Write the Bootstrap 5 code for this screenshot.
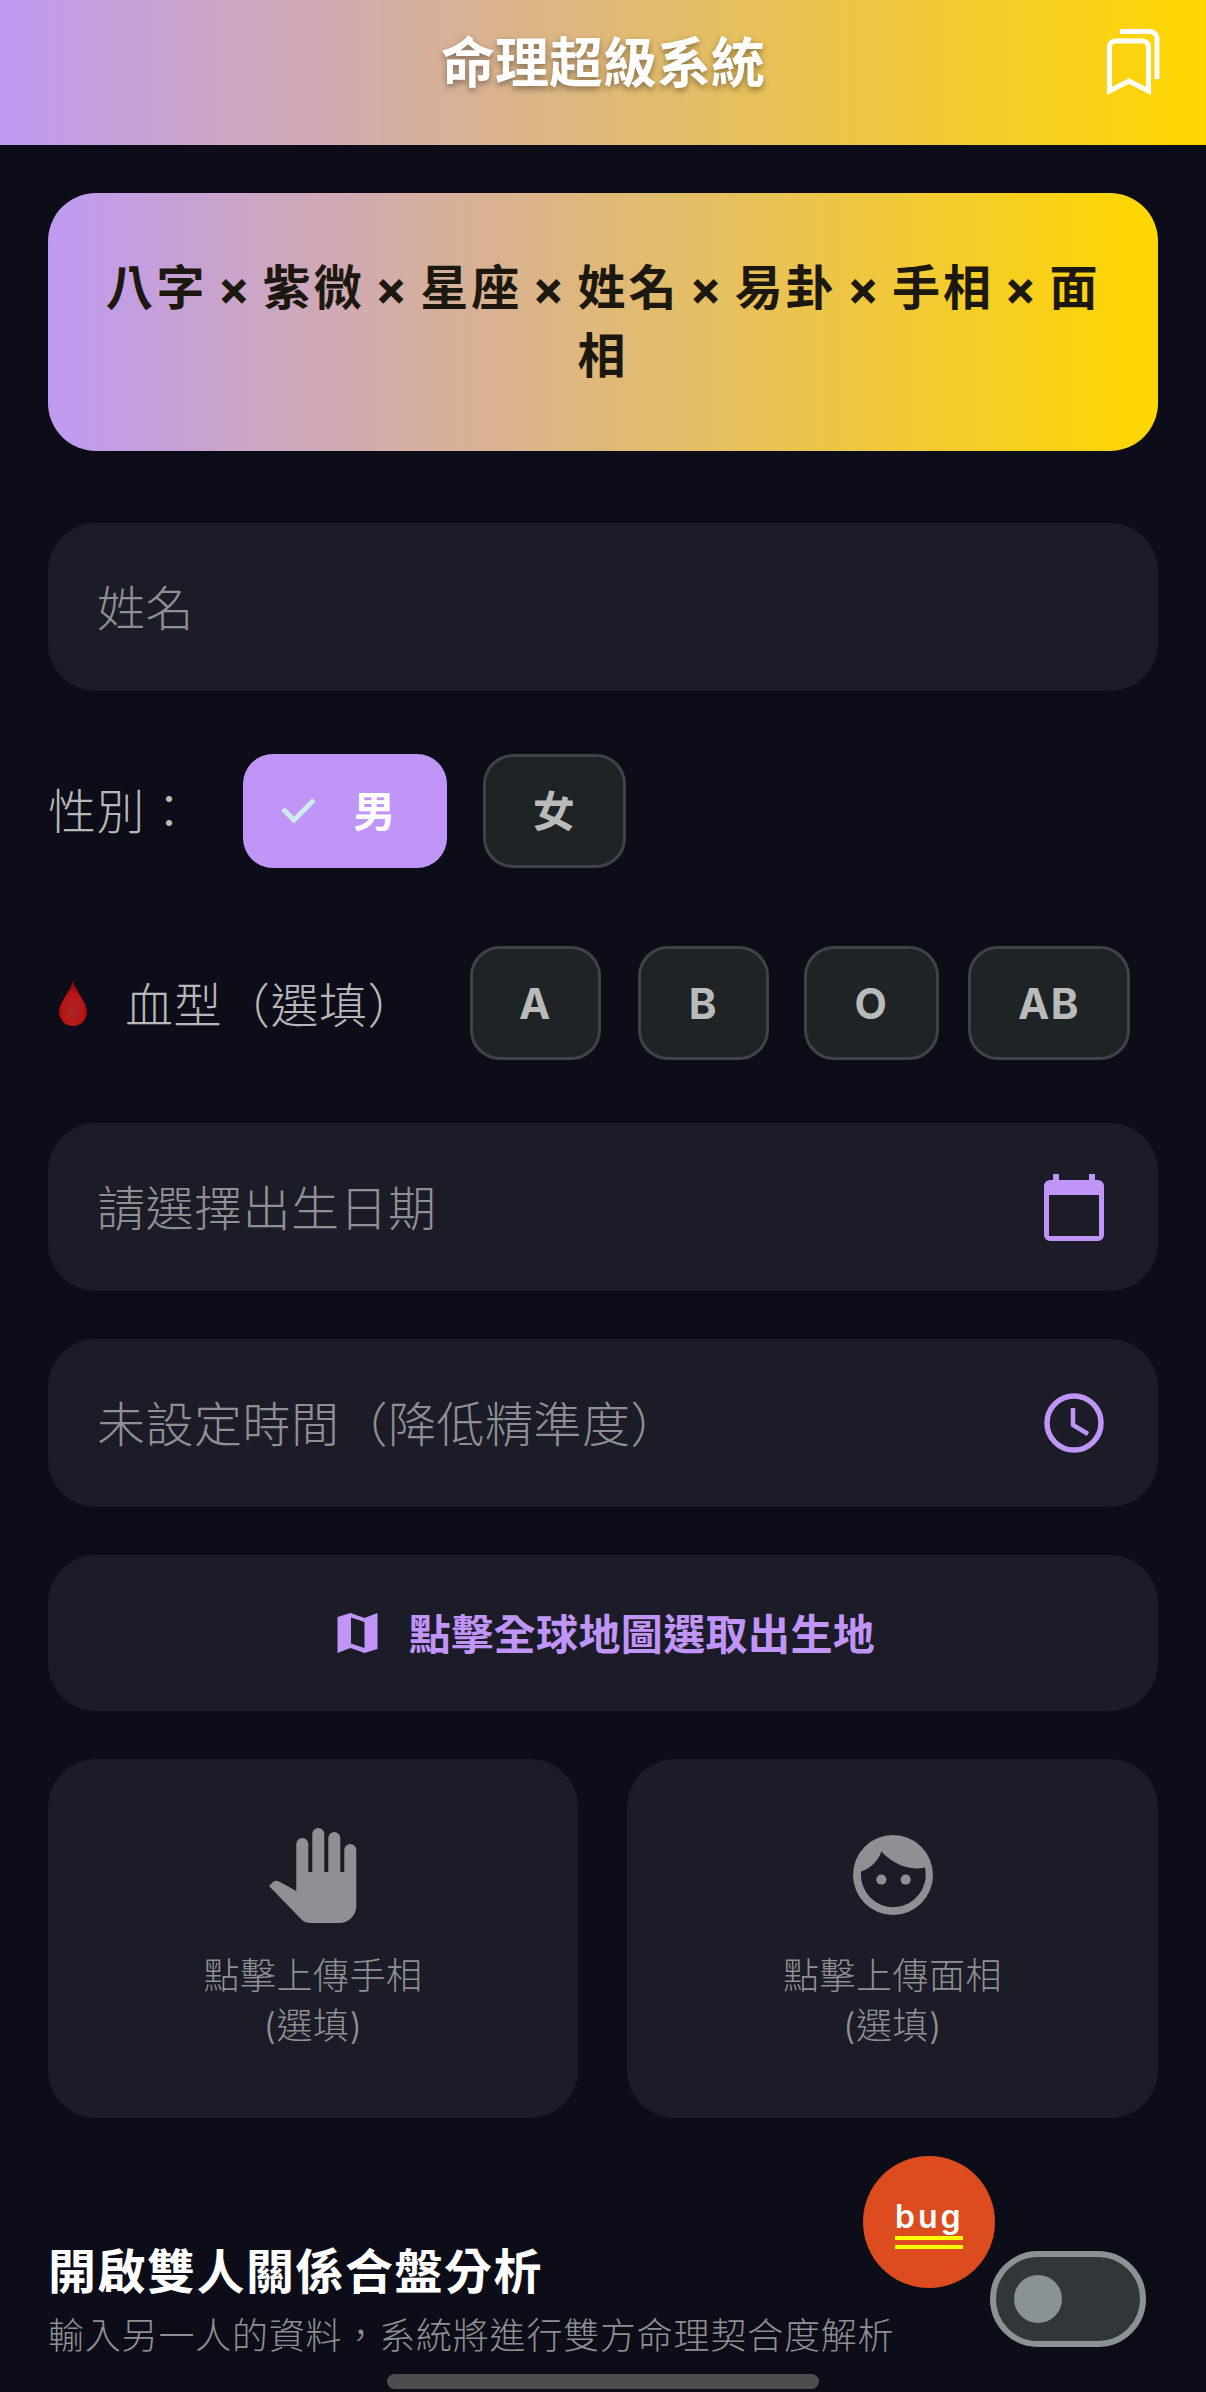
<!DOCTYPE html>
<html lang="zh-Hant">
<head>
  <meta charset="UTF-8" />
  <title>命理超級系統</title>
  <link href="https://cdn.jsdelivr.net/npm/bootstrap@5.3.0/dist/css/bootstrap.min.css" rel="stylesheet" />
  <style>
    html, body { height: 2392px; overflow: hidden; }
    body { background: #0c0d18; font-family: Inter, "Noto Sans CJK TC", sans-serif; color: #bbb; }
    .top-bar { height: 145px; background: linear-gradient(90deg, #bf9af2, #ffd700); padding: 0 42px 16px 48px; }
    .top-title { font-size: 54px; font-weight: 700; color: #fff; text-shadow: 0 3px 6px rgba(0,0,0,.4); margin: 0 0 0 -6px; line-height: 1.2; }
    .top-spacer { width: 60px; }
    .top-icon { margin-bottom: 7px; }
    .page-body { padding: 48px 48px 0; }
    .hero-box { height: 258px; border-radius: 48px; background: linear-gradient(90deg, #bf9af2, #ffd700); color: #1c1810; font-size: 48px; font-weight: 700; letter-spacing: 3px; word-spacing: -4.5px; line-height: 68px; padding: 0 48px; margin-bottom: 72px; }
    .field-box { height: 168px; border-radius: 48px; background: #1b1c28; padding: 0 54px 0 49px; font-size: 48px; font-weight: 300; letter-spacing: .5px; color: #8f9094; margin-bottom: 48px; }
    .field-text { padding-top: 3px; }
    input.field-box { width: 100%; border: 0; outline: 0; padding-top: 3px; margin-bottom: 63px; }
    input.field-box::placeholder { color: #8f9094; }
    .row-label { font-size: 48px; font-weight: 300; letter-spacing: .5px; color: #b8b8bb; margin: 0; padding-top: 6px; }
    .pick-btn { height: 114px; border-radius: 30px; background: #1e2326; border: 3px solid #3d4346; color: #b9bbbb; font-size: 42px; font-weight: 700; letter-spacing: 1.5px; padding: 0; }
    .pick-btn:hover { background: #1e2326; color: #b9bbbb; border-color: #3d4346; }
    .gender-row { margin-bottom: 78px; }
    .row-label.gender-label { width: 195px; padding-top: 2px; }
    .gender-on { width: 204px; background: #c195f8; border: 0; color: #fff; margin-right: 36px; padding-right: 12px; gap: 36px; }
    .gender-on:hover { background: #c195f8; color: #fff; }
    .gender-off { width: 143px; }
    .blood-row { margin-bottom: 63px; }
    .blood-label { width: 422px; padding-left: 11px; gap: 38px; }
    .blood-a { width: 131px; margin-right: 37px; }
    .blood-b { width: 131px; margin-right: 35px; }
    .blood-o { width: 135px; margin-right: 29px; }
    .blood-ab { width: 162px; }
    .map-box { height: 156px; border-radius: 48px; background: #1b1c28; color: #c195f8; font-size: 42px; font-weight: 700; letter-spacing: .4px; gap: 31px; padding-left: 6px; margin-bottom: 48px; }
    .map-text { padding-top: 2px; }
    .upload-grid { display: grid; grid-template-columns: 530px 531px; gap: 49px; margin-bottom: 123px; }
    .upload-box { height: 359px; border-radius: 48px; background: #1b1c28; color: #8f9094; font-size: 36px; font-weight: 300; letter-spacing: .5px; line-height: 50px; padding-top: 66px; }
    .upload-icon { height: 100px; margin-bottom: 26px; }
    .pair-row { height: 100px; }
    .pair-title { font-size: 48px; font-weight: 700; color: #fff; letter-spacing: 1.5px; margin: 0 0 7px; line-height: 62px; }
    .pair-sub { font-size: 36px; font-weight: 300; color: #8f9094; letter-spacing: .8px; margin: 0; line-height: 52px; }
    .toggle-track { position: absolute; left: 990px; top: 2251px; width: 156px; height: 96px; border-radius: 48px; background: #313638; border: 6px solid #8a9394; }
    .toggle-knob { position: absolute; left: 18px; top: 18px; width: 48px; height: 48px; border-radius: 50%; background: #8a9394; }
    .bug-fab { position: absolute; left: 863px; top: 2156px; width: 132px; height: 132px; border-radius: 50%; background: #dc4c1e; color: #fff; font-size: 32px; font-weight: 600; letter-spacing: 3px; }
    .bug-word { line-height: 38px; border-bottom: 4px solid #ff0; width: 68px; text-align: center; position: relative; top: -3px; }
    .bug-word::after { content: ""; position: absolute; left: 0; right: 0; bottom: -13px; height: 4px; background: #ff0; }
    .home-bar { position: absolute; left: 387px; top: 2374px; width: 432px; height: 15px; border-radius: 8px; background: #4d4d4d; }
  </style>
</head>
<body class="position-relative">
  <!-- Top bar -->
  <header class="top-bar d-flex align-items-center">
    <div class="top-spacer"></div>
    <h1 class="top-title flex-grow-1 text-center">命理超級系統</h1>
    <svg class="top-icon" width="60" height="72" viewBox="0 0 60 72" fill="none" stroke="#fff" stroke-width="5">
      <path d="M5.500 66V22a6 6 0 0 1 6-6h27a6 6 0 0 1 6 6v44L25 56z"/>
      <path d="M16 6.500h30a7 7 0 0 1 7 7V54"/>
    </svg>
  </header>

  <main class="page-body">
    <div class="hero-box d-flex align-items-center justify-content-center text-center">
      <div>八字 × 紫微 × 星座 × 姓名 × 易卦 × 手相 × 面相</div>
    </div>

    <input class="field-box d-block" type="text" placeholder="姓名" />

    <!-- Gender -->
    <div class="gender-row d-flex align-items-center">
      <p class="row-label gender-label">性別：</p>
      <button class="btn pick-btn gender-on d-flex align-items-center justify-content-center">
        <svg width="36" height="26" viewBox="0 0 36 26" fill="none" stroke="#cfeaee" stroke-width="5"><path d="M2 11l11 11L33 2"/></svg>
        <span>男</span>
      </button>
      <button class="btn pick-btn gender-off">女</button>
    </div>

    <!-- Blood type -->
    <div class="blood-row d-flex align-items-center">
      <div class="blood-label d-flex align-items-center">
        <svg width="28" height="46" viewBox="0 0 28 46">
          <defs><radialGradient id="dropFill" cx=".5" cy=".66" r=".55"><stop offset="0" stop-color="#a62a28"/><stop offset=".7" stop-color="#b81414"/><stop offset="1" stop-color="#8a0808"/></radialGradient></defs>
          <path d="M14 0C12 11 0 22 0 32a14 14 0 0 0 28 0C28 22 16 11 14 0z" fill="url(#dropFill)"/>
        </svg>
        <p class="row-label">血型（選填）</p>
      </div>
      <button class="btn pick-btn blood-a">A</button>
      <button class="btn pick-btn blood-b">B</button>
      <button class="btn pick-btn blood-o">O</button>
      <button class="btn pick-btn blood-ab">AB</button>
    </div>

    <!-- Date and time -->
    <div class="field-box d-flex align-items-center justify-content-between">
      <span class="field-text">請選擇出生日期</span>
      <svg width="60" height="67" viewBox="0 0 60 67">
        <path fill="#c195f8" fill-rule="evenodd" d="M9 0h6v6h30V0h6v6h3a6 6 0 0 1 6 6v49a6 6 0 0 1-6 6H6a6 6 0 0 1-6-6V12a6 6 0 0 1 6-6h3zM5 21v41h50V21z"/>
      </svg>
    </div>
    <div class="field-box d-flex align-items-center justify-content-between">
      <span class="field-text">未設定時間（降低精準度）</span>
      <svg width="60" height="60" viewBox="0 0 60 60" fill="none" stroke="#c195f8">
        <circle cx="30" cy="30" r="27" stroke-width="5.500"/>
        <path d="M29 15v17l15 9" stroke-width="4.500"/>
      </svg>
    </div>

    <!-- Map picker -->
    <div class="map-box d-flex align-items-center justify-content-center">
      <svg width="41" height="40" viewBox="0 0 40 40">
        <path fill="#c195f8" fill-rule="evenodd" d="M0 4L13 0l14 5L40 0v36l-13 4-14-5-13 5zM13.500 4.500v26L27 35V9z"/>
      </svg>
      <span class="map-text">點擊全球地圖選取出生地</span>
    </div>

    <!-- Uploads -->
    <div class="upload-grid">
      <div class="upload-box text-center">
        <div class="upload-icon d-flex align-items-center justify-content-center">
          <svg width="88" height="95" viewBox="0 0 88 95" fill="#8f9094">
            <path d="M27.300 63V16a6 6 0 0 1 12 0V44h4V6a6 6 0 0 1 12 0V44h4V10a6 6 0 0 1 12 0V44h4V22a6 6 0 0 1 12 0V78a17 17 0 0 1-17 17H42c-4 0-7-1-10-4L0 58l4-4c2-1.500 4-1.500 6-.5z"/>
          </svg>
        </div>
        <div>點擊上傳手相</div>
        <div>(選填)</div>
      </div>
      <div class="upload-box text-center">
        <div class="upload-icon d-flex align-items-center justify-content-center">
          <svg width="80" height="80" viewBox="0 0 79 79" fill="#8f9094">
            <path fill-rule="evenodd" d="M39.500 0a39.500 39.500 0 1 1 0 79 39.500 39.500 0 0 1 0-79zM8 36C17 33 25 26 28 16 37 27 55 36 71 32A32 32 0 1 1 8 36z"/>
            <circle cx="28" cy="44" r="5"/><circle cx="52" cy="44" r="5"/>
          </svg>
        </div>
        <div>點擊上傳面相</div>
        <div>(選填)</div>
      </div>
    </div>

    <!-- Pair analysis -->
    <div class="pair-row">
      <p class="pair-title">開啟雙人關係合盤分析</p>
      <p class="pair-sub">輸入另一人的資料，系統將進行雙方命理契合度解析</p>
    </div>
  </main>

  <div class="toggle-track"><div class="toggle-knob"></div></div>
  <div class="bug-fab d-flex align-items-center justify-content-center"><div class="bug-word">bug</div></div>
  <div class="home-bar"></div>

  <script src="https://cdn.jsdelivr.net/npm/bootstrap@5.3.0/dist/js/bootstrap.bundle.min.js"></script>
</body>
</html>
